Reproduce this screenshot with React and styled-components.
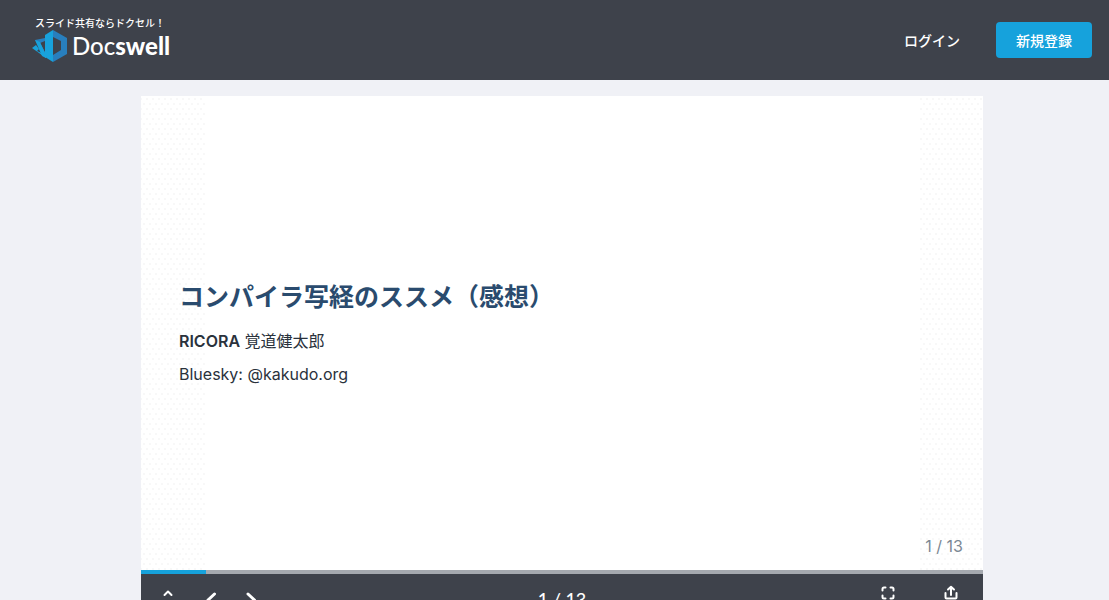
import React from 'react';
import styled, { createGlobalStyle } from 'styled-components';

const GlobalStyle = createGlobalStyle`
  * { box-sizing: border-box; }
  html, body { margin: 0; }
  body {
    background: #f0f1f6;
    font-family: Inter, "Noto Sans CJK JP", sans-serif;
    height: 100vh;
    overflow: hidden;
  }
`;

const Header = styled.header`
  display: flex;
  align-items: center;
  justify-content: space-between;
  height: 80px;
  padding: 0 17px 0 32px;
  background: #3e424b;
  color: #fff;
`;

const Brand = styled.a`
  display: flex;
  flex-direction: column;
  padding-bottom: 2px;
  color: #fff;
  text-decoration: none;
`;

const Tagline = styled.span`
  padding-left: 3px;
  font: 500 10px/14px "Noto Sans CJK JP", sans-serif;
`;

const Wordmark = styled.span`
  display: flex;
  align-items: center;
  gap: 4px;
  font: 500 24px/32px Lato, sans-serif;

  b { font-weight: 900; }
`;

const Nav = styled.nav`
  display: flex;
  align-items: center;
  gap: 36px;
  font: 500 14px/20px "Noto Sans CJK JP", sans-serif;
`;

const LoginLink = styled.a`
  color: #fff;
  text-decoration: none;
`;

const SignUpButton = styled.button`
  height: 36px;
  padding: 0 20px;
  border: 0;
  border-radius: 4px;
  background: #16a2dc;
  color: #fff;
  font: 500 14px/20px "Noto Sans CJK JP", sans-serif;
`;

const Main = styled.main`
  padding: 16px 126px 0 141px;
`;

const Slide = styled.section`
  position: relative;
  display: flex;
  flex-direction: column;
  justify-content: center;
  aspect-ratio: 842 / 474;
  padding: 6px 38px 0;
  background:
    linear-gradient(#fff, #fff) center / calc(100% - 128px) 100% no-repeat,
    radial-gradient(circle at 3px 3px, #f8f8f8 1px, transparent 1px) 0 5px / 6px 10px,
    radial-gradient(circle at 3px 3px, #f8f8f8 1px, transparent 1px) 3px 10px / 6px 10px,
    #fff;
  color: #2a323c;
  font-size: 16px;
  line-height: 24px;
`;

const Title = styled.h1`
  margin: 0 0 12px;
  color: #2a4b6e;
  font-size: 25px;
  line-height: 40px;
`;

const Line = styled.p`
  margin: 0 0 9px;

  b { font-weight: 600; }
`;

const PageNumber = styled.span`
  position: absolute;
  right: 20px;
  bottom: 12px;
  color: #7c8894;
`;

const Progress = styled.div`
  height: 4px;
  background: #a5a9af;
`;

const ProgressFill = styled.div`
  height: 100%;
  background: #16a2dc;
`;

const Toolbar = styled.div`
  display: grid;
  grid-template-columns: 1fr auto 1fr;
  align-items: center;
  height: 50px;
  padding: 0 20px 0 15px;
  background: #3e424b;
  color: #fff;
`;

const Tools = styled.div`
  display: flex;
  align-items: center;
  justify-content: ${(p) => (p.$end ? 'flex-end' : 'flex-start')};
  gap: ${(p) => (p.$end ? 39 : 18)}px;
`;

const ToolButton = styled.button`
  display: flex;
  align-items: center;
  justify-content: center;
  width: 24px;
  height: 36px;
  padding: 0 0 ${(p) => (p.$raised ? 12 : 0)}px;
  border: 0;
  background: none;
  color: inherit;
`;

const Counter = styled.span`
  padding-left: 5px;
  font: 500 18px/24px Lato, sans-serif;
`;

const LogoMark = () => (
  <svg width="36" height="32" viewBox="0 0 36 32" aria-hidden="true">
    <path d="M21 0 35 8v16l-14 8v-7l8-5v-9l-8-4z" fill="#287fbe" />
    <path d="M3 10 13 8v3L8 13l5 9v5z" fill="#287fbe" />
    <path d="M0 18 4 15l3 4-2 2 9 4v3z" fill="#18a2dc" />
    <path d="M3 10 8 12l6 13v3l-4-2z" fill="#18a2dc" />
    <path d="M13 5 21 0v32l-8-5z" fill="#18a2dc" />
  </svg>
);

const Icon = ({ size = 16, width = 2, d }) => (
  <svg
    width={size}
    height={size}
    viewBox={`0 0 ${size} ${size}`}
    fill="none"
    stroke="currentColor"
    strokeWidth={width}
    strokeLinecap="round"
    strokeLinejoin="round"
    aria-hidden="true"
  >
    <path d={d} />
  </svg>
);

export default function App() {
  const page = 1;
  const total = 13;
  return (
    <>
      <GlobalStyle />
      <Header>
        <Brand href="#">
          <Tagline>スライド共有ならドクセル！</Tagline>
          <Wordmark>
            <LogoMark />
            <span>Doc<b>swell</b></span>
          </Wordmark>
        </Brand>
        <Nav>
          <LoginLink href="#">ログイン</LoginLink>
          <SignUpButton>新規登録</SignUpButton>
        </Nav>
      </Header>
      <Main>
        <Slide>
          <Title>コンパイラ写経のススメ（感想）</Title>
          <Line><b>RICORA</b> 覚道健太郎</Line>
          <Line>Bluesky: @kakudo.org</Line>
          <PageNumber>{page} / {total}</PageNumber>
        </Slide>
        <Progress>
          <ProgressFill style={{ width: `${(page / total) * 100}%` }} />
        </Progress>
        <Toolbar>
          <Tools>
            <ToolButton $raised aria-label="一覧"><Icon width={2} d="M4.500 10 8 6.500 11.500 10" /></ToolButton>
            <ToolButton aria-label="前へ"><Icon size={24} width={3} d="M16.500 7 10 13l6.500 6" /></ToolButton>
            <ToolButton aria-label="次へ"><Icon size={24} width={3} d="M8 7l6.500 6L8 19" /></ToolButton>
          </Tools>
          <Counter>{page} / {total}</Counter>
          <Tools $end>
            <ToolButton $raised aria-label="全画面"><Icon d="M2.500 5.500V4A1.500 1.500 0 0 1 4 2.500h1.500M10.500 2.500H12A1.500 1.500 0 0 1 13.500 4v1.500M13.500 10.500V12a1.500 1.500 0 0 1-1.500 1.500h-1.500M5.500 13.500H4A1.500 1.500 0 0 1 2.500 12v-1.500" /></ToolButton>
            <ToolButton $raised aria-label="共有"><Icon d="M8 10V2M5 4.500 8 1.800l3 2.700M2.500 8v4.500a1 1 0 0 0 1 1h9a1 1 0 0 0 1-1V8" /></ToolButton>
          </Tools>
        </Toolbar>
      </Main>
    </>
  );
}
